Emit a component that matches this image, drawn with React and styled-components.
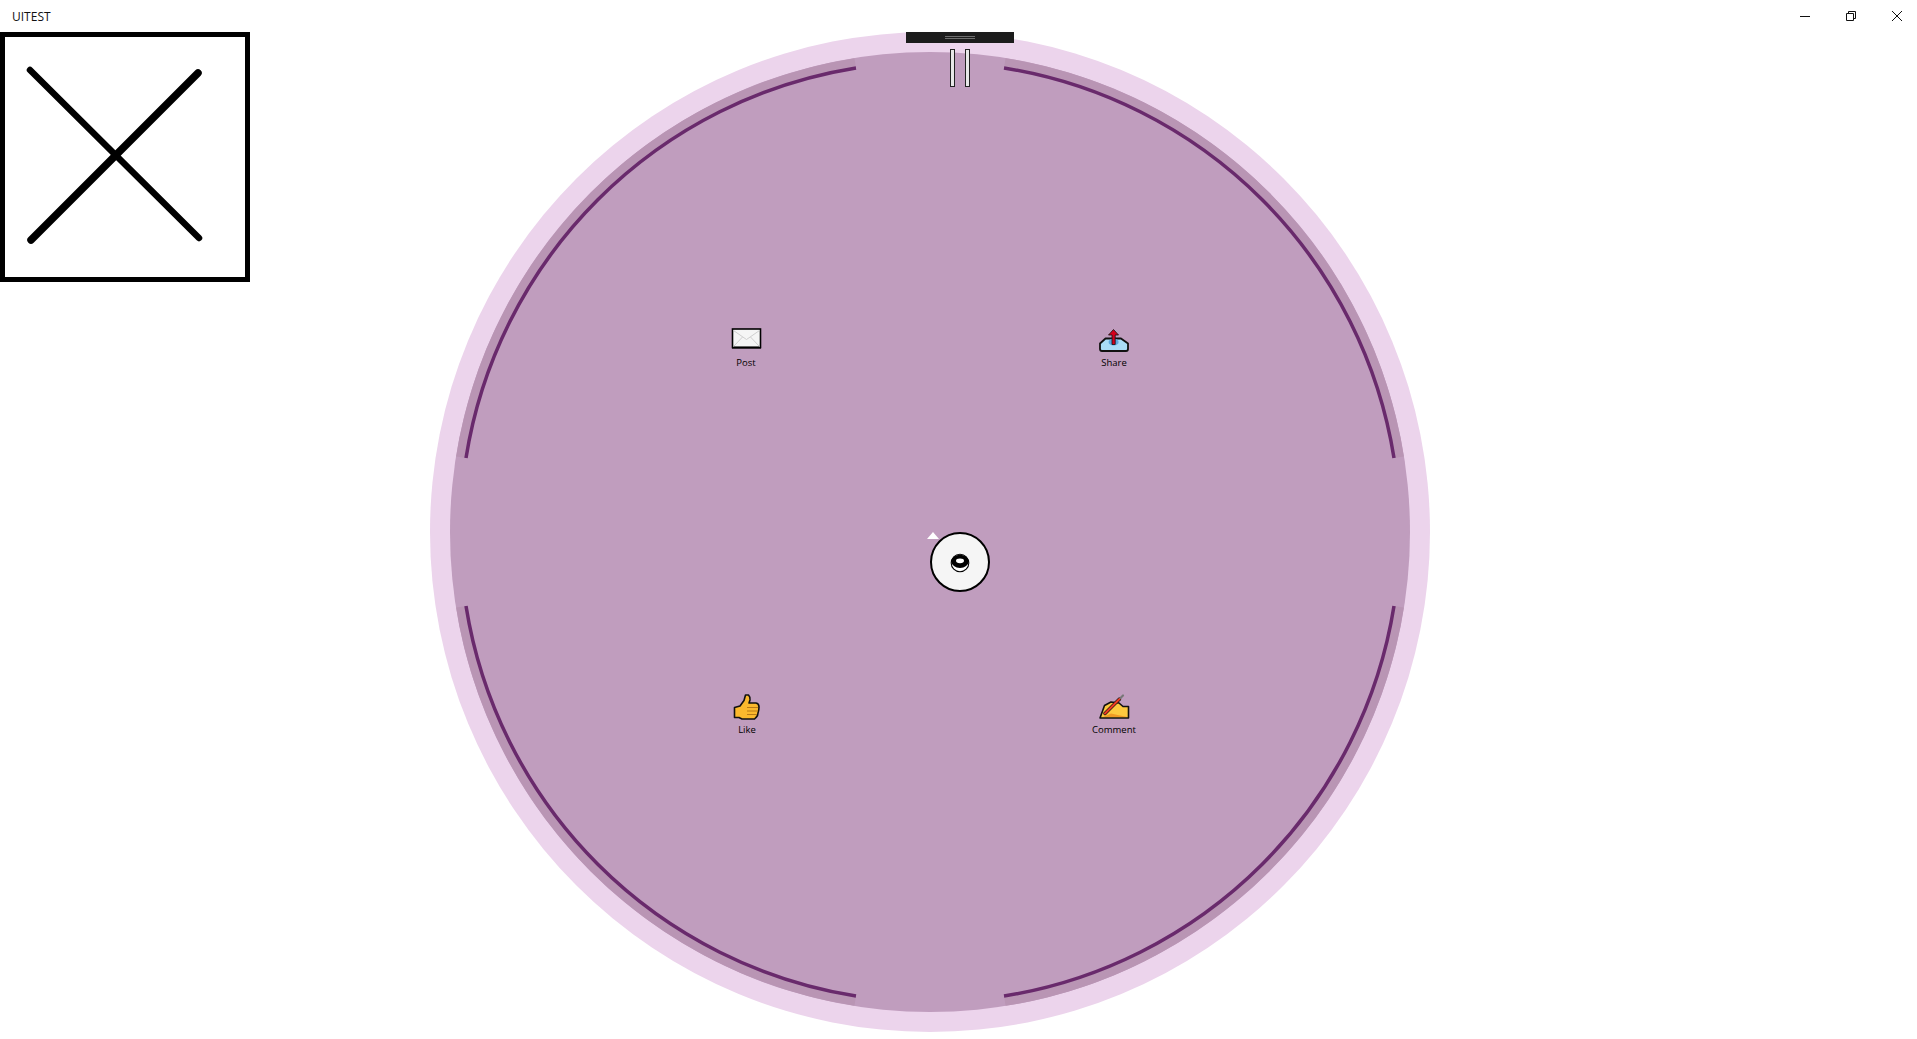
import styled, { createGlobalStyle } from 'styled-components'

const GlobalStyle = createGlobalStyle`
  html, body {
    margin: 0;
    height: 100%;
    background: #fff;
    overflow: hidden;
  }
  body {
    font-family: "Open Sans", "Noto Sans", sans-serif;
    color: #111;
  }
`

// start and end of each arc, as offsets from the dial centre (radius 470)
const ARCS = [
  [74, -464, 464, -74],
  [464, 74, 74, 464],
  [-74, 464, -464, 74],
  [-464, -74, -74, -464],
]

const arcPath = ([x1, y1, x2, y2], r) => {
  const k = r / 470
  return `M ${500 + x1 * k} ${500 + y1 * k} A ${r} ${r} 0 0 1 ${500 + x2 * k} ${500 + y2 * k}`
}

const App = () => {
  return (
    <Page>
      <GlobalStyle />
      <TitleBar>
        <AppTitle>UITEST</AppTitle>
        <WindowButtons>
          <WindowButton>
            <svg width="12" height="12" viewBox="0 0 12 12">
              <path d="M1 6.5h10" stroke="#111" fill="none" />
            </svg>
          </WindowButton>
          <WindowButton>
            <svg width="12" height="12" viewBox="0 0 12 12">
              <path d="M1.5 3.5h7v7h-7z M3.5 3.5v-2h7v7h-2" stroke="#111" fill="none" />
            </svg>
          </WindowButton>
          <WindowButton>
            <svg width="12" height="12" viewBox="0 0 12 12">
              <path d="M1 1l10 10M11 1L1 11" stroke="#111" fill="none" />
            </svg>
          </WindowButton>
        </WindowButtons>
      </TitleBar>

      <Content>
        <CloseBox>
          <svg width="240" height="240" viewBox="0 0 240 240">
            <path d="M25 33L194 201" stroke="#000" strokeWidth="6.5" strokeLinecap="round" />
            <path d="M193 36L26 203" stroke="#000" strokeWidth="7.5" strokeLinecap="round" />
          </svg>
        </CloseBox>

        <Dial>
          <DialFace />
          <RingLayer width="1000" height="1000" viewBox="0 0 1000 1000">
            {ARCS.map((arc, i) => (
              <path key={`band${i}`} d={arcPath(arc, 475)} stroke="#b995b4" strokeWidth="10" fill="none" />
            ))}
            {ARCS.map((arc, i) => (
              <path key={`arc${i}`} d={arcPath(arc, 470)} stroke="#692a6c" strokeWidth="3.5" fill="none" />
            ))}
          </RingLayer>

          <Grip>
            <GripLine />
            <GripLine />
          </Grip>
          <PauseBar $x={520} />
          <PauseBar $x={535} />

          <Action $x={316} $y={292}>
            <svg width="32" height="32" viewBox="0 0 32 32">
              <rect x="2.5" y="5" width="28" height="18.5" fill="#f5f5f5" stroke="#000" strokeWidth="1.6" />
              <path d="M2 23.6h29" stroke="#000" strokeWidth="2" />
              <path d="M3.5 6.5L16.5 15.5L29.5 6.5M3.5 22.5L12.5 13M29.5 22.5L20.5 13" stroke="#cfcfcf" strokeWidth="1" fill="none" />
            </svg>
            <Label>Post</Label>
          </Action>

          <Action $x={684} $y={292}>
            <svg width="32" height="32" viewBox="0 0 32 32">
              <path d="M7.5 14.5H23L30 19.5V25Q30 27 28 27H4Q2 27 2 25V19.5Z" fill="#a9dcf7" stroke="#111" strokeWidth="1.8" strokeLinejoin="round" />
              <ellipse cx="15.6" cy="18" rx="5" ry="3.6" fill="#5da6dc" />
              <path d="M15.5 5.5L20.5 11H17.2V20.5H14V11H10.5Z" fill="#d4001c" stroke="#111" strokeWidth="0.8" strokeLinejoin="round" />
            </svg>
            <Label>Share</Label>
          </Action>

          <Action $x={317} $y={659}>
            <svg width="32" height="32" viewBox="0 0 32 32">
              <path d="M3.5 16.5L9 15L13 9.5L14.5 4H17.5Q19.5 6 19 9L18 12H25Q28 12.5 28 16Q28 19 27 22Q27 25 25 26.5L23.5 28H11L8 26.5H3.5Z" fill="#fbb92d" stroke="#111" strokeWidth="1.6" strokeLinejoin="round" />
              <path d="M16 16.5H27M16 20H27M16 23.5H26" stroke="#b87a16" strokeWidth="1" fill="none" />
            </svg>
            <Label>Like</Label>
          </Action>

          <Action $x={684} $y={659}>
            <svg width="32" height="32" viewBox="0 0 32 32">
              <path d="M2 27L6.5 14.5L13 11L21 12L25 15.5H30.5V27Z" fill="#fdc93f" stroke="#111" strokeWidth="1.6" strokeLinejoin="round" />
              <path d="M5 26L13 22.5L22 24.5L29.5 26Z" fill="#f09a24" />
              <path d="M7 22.5L21.5 8" stroke="#111" strokeWidth="3.4" strokeLinecap="round" />
              <path d="M7 22.5L21.5 8" stroke="#ee3a22" strokeWidth="2.2" strokeLinecap="round" />
              <path d="M22.5 7L25 4.5" stroke="#777" strokeWidth="2.2" strokeLinecap="round" />
            </svg>
            <Label>Comment</Label>
          </Action>

          <Caret />
          <Hub>
            <Eye width="22" height="22" viewBox="0 0 22 22">
              <circle cx="11" cy="11" r="8.8" fill="#fff" stroke="#000" strokeWidth="1.1" />
              <ellipse cx="11" cy="9.4" rx="8.6" ry="6.6" fill="#000" />
              <ellipse cx="11" cy="8.8" rx="4" ry="2.4" fill="#fff" />
            </Eye>
          </Hub>
        </Dial>
      </Content>
    </Page>
  )
}

const Page = styled.main`
  width: 1917px;
  height: 1039px;
  display: flex;
  flex-direction: column;
`

const TitleBar = styled.header`
  height: 32px;
  flex: none;
  display: flex;
  align-items: center;
  justify-content: space-between;
  padding-left: 12px;
`

const AppTitle = styled.span`
  font-size: 12px;
  color: #111;
`

const WindowButtons = styled.div`
  display: flex;
  gap: 6px;
`

const WindowButton = styled.div`
  width: 40px;
  height: 32px;
  display: flex;
  align-items: center;
  justify-content: center;
`

const Content = styled.div`
  display: flex;
  align-items: flex-start;
`

const CloseBox = styled.div`
  width: 250px;
  height: 250px;
  box-sizing: border-box;
  border: 5px solid #000;
  background: #fff;
  flex: none;

  svg {
    display: block;
  }
`

const Dial = styled.section`
  position: relative;
  width: 1000px;
  height: 1000px;
  box-sizing: border-box;
  margin-left: 180px;
  padding: 20px;
  flex: none;
  border-radius: 50%;
  background: #ecd4ec;
`

const DialFace = styled.div`
  width: 100%;
  height: 100%;
  border-radius: 50%;
  background: #c09dbe;
`

const RingLayer = styled.svg`
  position: absolute;
  left: 0;
  top: 0;
`

const Grip = styled.div`
  position: absolute;
  left: 476px;
  top: 0;
  width: 108px;
  height: 11px;
  background: #1c1c1c;
  display: flex;
  flex-direction: column;
  align-items: center;
  gap: 1px;
  padding-top: 4px;
  box-sizing: border-box;
`

const GripLine = styled.div`
  width: 30px;
  height: 1px;
  background: #6e6e6e;
`

const PauseBar = styled.div`
  position: absolute;
  left: ${(p) => p.$x}px;
  top: 17px;
  width: 5px;
  height: 38px;
  box-sizing: border-box;
  border: 1px solid #222;
  background: #e8e8e8;
`

const Action = styled.div`
  position: absolute;
  left: ${(p) => p.$x - 30}px;
  top: ${(p) => p.$y}px;
  width: 60px;
  display: flex;
  flex-direction: column;
  align-items: center;

  svg {
    display: block;
  }
`

const Label = styled.span`
  font-size: 9.5px;
  line-height: 14px;
  color: #000;
`

const Caret = styled.div`
  position: absolute;
  left: 497px;
  top: 500px;
  width: 0;
  height: 0;
  border-left: 6px solid transparent;
  border-right: 6px solid transparent;
  border-bottom: 7px solid #fff;
`

const Hub = styled.div`
  position: absolute;
  left: 500px;
  top: 500px;
  width: 60px;
  height: 60px;
  box-sizing: border-box;
  border: 2px solid #000;
  border-radius: 50%;
  background: #f5f5f5;
  display: flex;
  align-items: center;
  justify-content: center;
`

const Eye = styled.svg`
  display: block;
  margin-top: 2px;
`

export default App
